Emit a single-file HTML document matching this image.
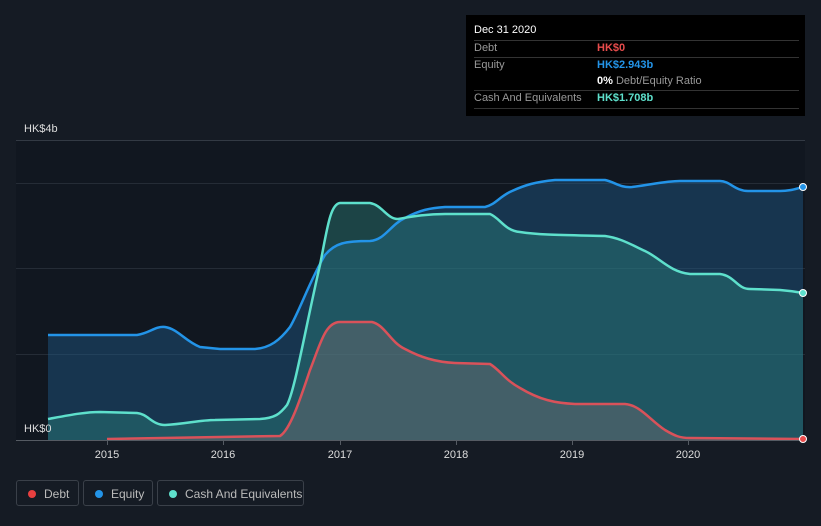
<!DOCTYPE html>
<html><head><meta charset="utf-8"><style>
body{margin:0;background:#151b24;width:821px;height:526px;overflow:hidden;font-family:"Liberation Sans",sans-serif;position:relative}
.tt{position:absolute;left:466px;top:15px;width:339px;height:101px;background:#000;font-size:11px;color:#999}
.tt .r{position:absolute;left:8px;right:6px;border-top:1px solid #333}
.lg{position:absolute;top:480px;height:26px;border:1px solid #3a4049;border-radius:3px;color:#bbb;font-size:12px;line-height:26px;box-sizing:border-box}
.lg i{position:absolute;left:11px;top:9px;width:8px;height:8px;border-radius:50%}
.lg span{position:absolute;left:27px}
</style></head><body>
<svg width="821" height="526" style="position:absolute;left:0;top:0">
<rect x="16" y="140" width="789" height="300" fill="#111720"/>
<line x1="16" y1="140.5" x2="805" y2="140.5" stroke="#333a44"/>
<line x1="16" y1="183.5" x2="805" y2="183.5" stroke="#252c36"/>
<line x1="16" y1="268.5" x2="805" y2="268.5" stroke="#252c36"/>
<line x1="16" y1="354.5" x2="805" y2="354.5" stroke="#252c36"/>
<path d="M48,335 L137,335 C150,333 155,326 165,327 C178,329 185,341 200,347 L220,349 L255,349 C270,348 280,340 290,327 C300,310 310,280 325,255 C335,243 345,241 370,241 C385,240 390,225 405,218 C420,210 430,208 445,207 L485,207 C495,205 500,196 512,191 C525,185 535,182 555,180 L605,180 C615,182 620,188 632,187 C650,185 665,181 680,181 L720,181 C730,181 735,191 748,191 L780,191 C790,191 795,189 803,187 L803,440 L48,440Z" fill="#1f5a8a" fill-opacity="0.45"/>
<path d="M48,419 C70,415 85,412 100,412 L137,413 C148,414 152,425 165,425 C185,424 200,420 215,420 L260,419 C275,418 280,414 287,405 C295,390 305,330 320,265 C327,230 330,204 340,203 L370,203 C382,205 387,219 398,219 C410,217 425,214 445,214 L490,214 C500,218 505,231 520,232 C540,235 560,235 605,236 C620,238 630,244 645,251 C660,258 670,272 690,274 L720,274 C735,276 737,289 750,289 L780,290 C792,291 797,292 803,293 L803,440 L48,440Z" fill="#2e8a80" fill-opacity="0.4"/>
<path d="M107,439 L220,437 L280,436 C290,430 300,400 310,370 C320,345 325,322 340,322 L372,322 C385,325 390,342 405,349 C420,357 435,362 455,363 L490,364 C500,370 505,380 520,388 C540,400 555,403 575,404 L625,404 C640,405 650,420 665,430 C675,436 680,438 690,438 L803,439 L803,440 L107,440Z" fill="#7a6e74" fill-opacity="0.4"/>
<path d="M48,335 L137,335 C150,333 155,326 165,327 C178,329 185,341 200,347 L220,349 L255,349 C270,348 280,340 290,327 C300,310 310,280 325,255 C335,243 345,241 370,241 C385,240 390,225 405,218 C420,210 430,208 445,207 L485,207 C495,205 500,196 512,191 C525,185 535,182 555,180 L605,180 C615,182 620,188 632,187 C650,185 665,181 680,181 L720,181 C730,181 735,191 748,191 L780,191 C790,191 795,189 803,187" fill="none" stroke="#2394e8" stroke-width="2.5"/>
<path d="M48,419 C70,415 85,412 100,412 L137,413 C148,414 152,425 165,425 C185,424 200,420 215,420 L260,419 C275,418 280,414 287,405 C295,390 305,330 320,265 C327,230 330,204 340,203 L370,203 C382,205 387,219 398,219 C410,217 425,214 445,214 L490,214 C500,218 505,231 520,232 C540,235 560,235 605,236 C620,238 630,244 645,251 C660,258 670,272 690,274 L720,274 C735,276 737,289 750,289 L780,290 C792,291 797,292 803,293" fill="none" stroke="#5ee0cc" stroke-width="2.5"/>
<path d="M107,439 L220,437 L280,436 C290,430 300,400 310,370 C320,345 325,322 340,322 L372,322 C385,325 390,342 405,349 C420,357 435,362 455,363 L490,364 C500,370 505,380 520,388 C540,400 555,403 575,404 L625,404 C640,405 650,420 665,430 C675,436 680,438 690,438 L803,439" fill="none" stroke="#d9525a" stroke-width="2.5"/>
<line x1="16" y1="440.5" x2="805" y2="440.5" stroke="#555b63"/>
<g stroke="#555b63"><line x1="107.5" y1="440" x2="107.5" y2="445"/><line x1="223.5" y1="440" x2="223.5" y2="445"/><line x1="340.5" y1="440" x2="340.5" y2="445"/><line x1="456.5" y1="440" x2="456.5" y2="445"/><line x1="572.5" y1="440" x2="572.5" y2="445"/><line x1="688.5" y1="440" x2="688.5" y2="445"/></g>
<circle cx="803" cy="187" r="3.5" fill="#2394e8" stroke="#fff" stroke-width="1"/>
<circle cx="803" cy="293" r="3.5" fill="#5ee0cc" stroke="#fff" stroke-width="1"/>
<circle cx="803" cy="439" r="3.5" fill="#e84c4c" stroke="#fff" stroke-width="1"/>
<g fill="#ddd" font-size="11" font-family="Liberation Sans,sans-serif" text-anchor="middle">
<text x="107" y="458">2015</text><text x="223" y="458">2016</text><text x="340" y="458">2017</text><text x="456" y="458">2018</text><text x="572" y="458">2019</text><text x="688" y="458">2020</text></g>
<text x="24" y="132" fill="#ddd" font-size="11" font-family="Liberation Sans,sans-serif">HK$4b</text>
<text x="24" y="432" fill="#ddd" font-size="11" font-family="Liberation Sans,sans-serif">HK$0</text>
</svg>
<div class="tt">
<div style="position:absolute;left:8px;top:9px;color:#fff">Dec 31 2020</div>
<div class="r" style="top:25px"></div>
<div style="position:absolute;left:8px;top:27px">Debt</div><div style="position:absolute;left:131px;top:27px;color:#e84c4c;font-weight:bold">HK$0</div>
<div class="r" style="top:42px"></div>
<div style="position:absolute;left:8px;top:44px">Equity</div><div style="position:absolute;left:131px;top:44px;color:#2394e8;font-weight:bold">HK$2.943b</div>
<div style="position:absolute;left:131px;top:60px"><b style="color:#fff">0%</b> Debt/Equity Ratio</div>
<div class="r" style="top:75px"></div>
<div style="position:absolute;left:8px;top:77px">Cash And Equivalents</div><div style="position:absolute;left:131px;top:77px;color:#5ee0cc;font-weight:bold">HK$1.708b</div>
<div class="r" style="top:93px"></div>
</div>
<div class="lg" style="left:16px;width:63px"><i style="background:#e84040"></i><span>Debt</span></div>
<div class="lg" style="left:83px;width:70px"><i style="background:#2394e8"></i><span>Equity</span></div>
<div class="lg" style="left:157px;width:147px"><i style="background:#5ee0cc"></i><span>Cash And Equivalents</span></div>
</body></html>
